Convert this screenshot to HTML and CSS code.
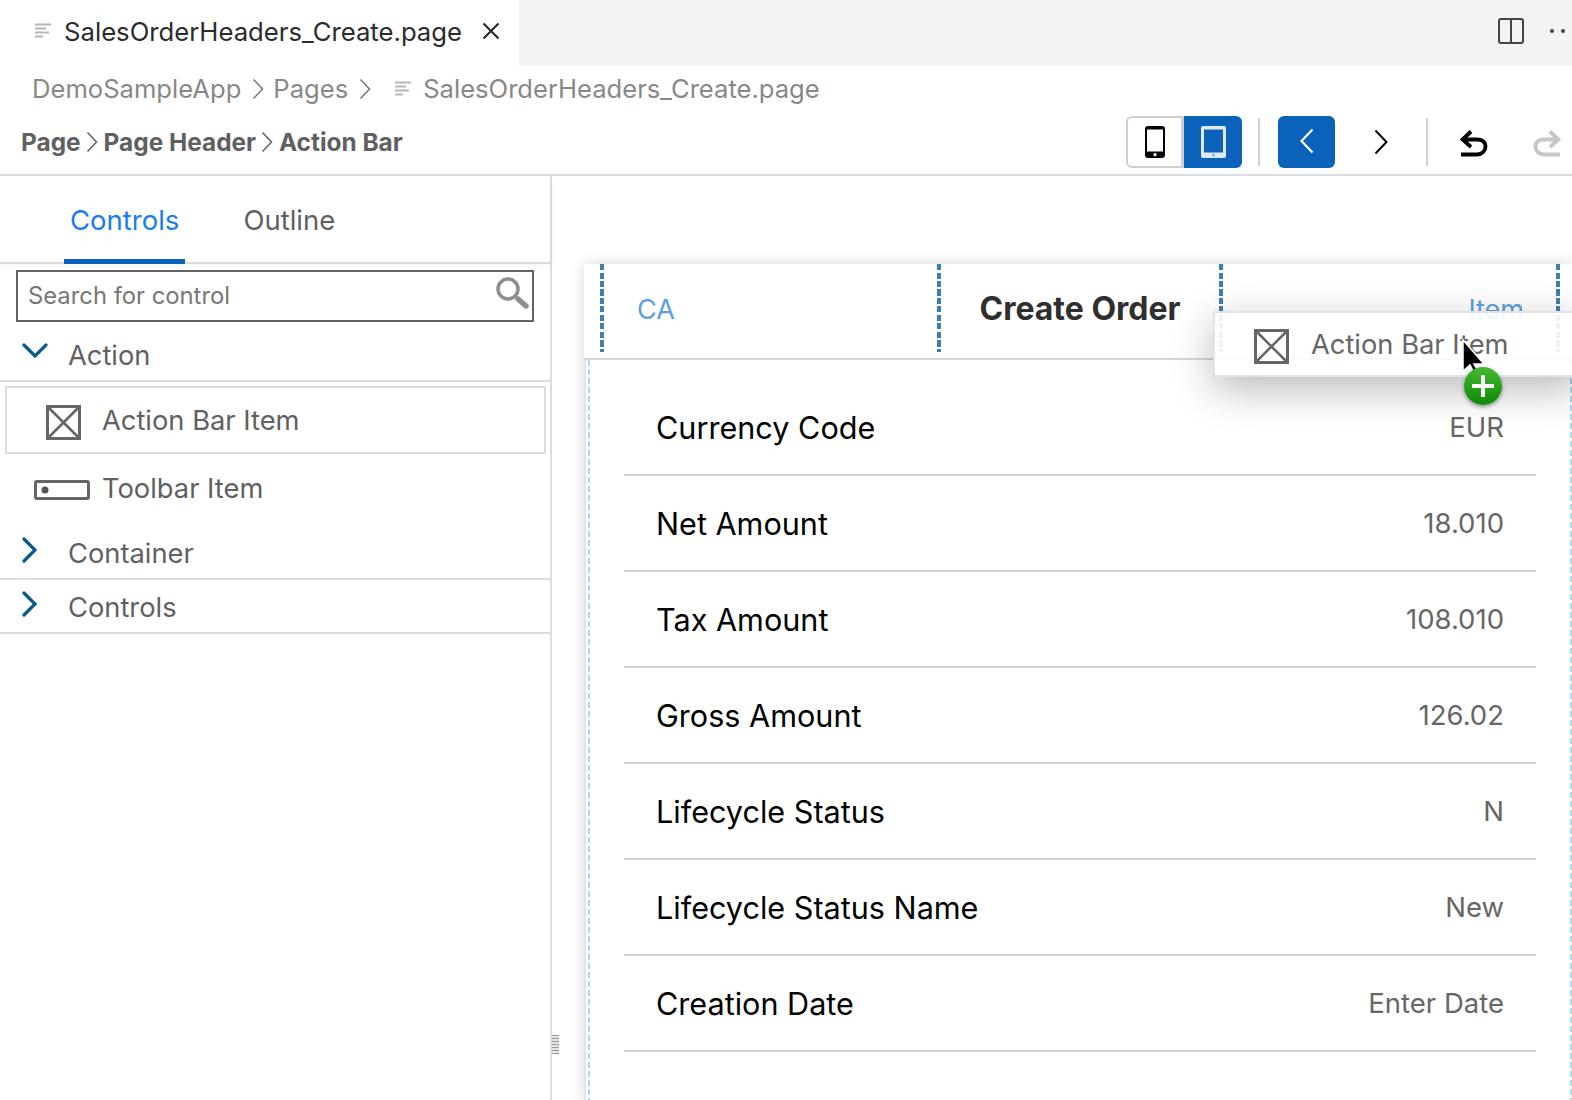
FILE: index.html
```html
<!DOCTYPE html>
<html lang="en">
<head>
  <meta charset="UTF-8" />
  <title>SalesOrderHeaders_Create.page</title>
  <link rel="stylesheet" href="styles.css">
</head>
<body>
  <div class="tabbar">
    <div class="tab">
      <svg class="file-icon" viewBox="0 0 16 16"><path d="M0 1.500h16M0 5.500h11M0 9.500h14M0 13.500h8"/></svg>
      <span>SalesOrderHeaders_Create.page</span>
      <svg class="tab-close" viewBox="0 0 18 18"><path d="M1.500 1.500l15 15M16.500 1.500l-15 15"/></svg>
    </div>
    <div class="tab-actions">
      <svg class="split-icon" viewBox="0 0 26 26"><rect x="1" y="1" width="24" height="24" rx="2"/><path d="M13 1v24"/></svg>
      <div class="dots"><i></i><i></i><i></i></div>
    </div>
  </div>

  <div class="crumbs">
    <span>DemoSampleApp</span>
    <svg class="chev" viewBox="0 0 12 22"><path d="M1.500 1.500l9 9.500-9 9.500"/></svg>
    <span>Pages</span>
    <svg class="chev" viewBox="0 0 12 22"><path d="M1.500 1.500l9 9.500-9 9.500"/></svg>
    <svg class="file-icon crumb-file" viewBox="0 0 16 16"><path d="M0 1.500h16M0 5.500h11M0 9.500h14M0 13.500h8"/></svg>
    <span>SalesOrderHeaders_Create.page</span>
  </div>

  <div class="toolbar">
    <div class="path">
      <b>Page</b>
      <svg class="chev" viewBox="0 0 12 22"><path d="M1.500 1.500l9 9.500-9 9.500"/></svg>
      <b>Page Header</b>
      <svg class="chev" viewBox="0 0 12 22"><path d="M1.500 1.500l9 9.500-9 9.500"/></svg>
      <b>Action Bar</b>
    </div>
    <div class="tools">
      <div class="segment">
        <div class="seg seg-phone">
          <svg width="20" height="32" viewBox="0 0 20 32"><rect width="20" height="32" rx="3" fill="#000"/><rect x="2" y="3.500" width="16" height="22" fill="#fff"/><circle cx="10" cy="28.700" r="1.600" fill="#fff"/></svg>
        </div>
        <div class="seg seg-tablet">
          <svg width="25" height="32" viewBox="0 0 25 32"><rect width="25" height="32" rx="2" fill="#dfeafa"/><rect x="3" y="3.500" width="19" height="23" fill="#0a62bb"/><circle cx="12.500" cy="29" r="1.500" fill="#8ab4e8"/></svg>
        </div>
      </div>
      <div class="tool-sep first-sep"></div>
      <div class="nav-back">
        <svg width="14" height="26" viewBox="0 0 14 26"><path d="M12.500 1.500L1.500 13l11 11.500" fill="none" stroke="#fff" stroke-width="2.200"/></svg>
      </div>
      <svg class="nav-next" width="14" height="26" viewBox="0 0 14 26"><path d="M1.500 1.500L12.500 13l-11 11.500" fill="none" stroke="#000" stroke-width="2"/></svg>
      <div class="tool-sep second-sep"></div>
      <svg class="undo" width="28" height="28" viewBox="0 0 28 28"><path d="M11 1.500L2.500 9.500 11 17M3 9.500h14c5 0 8.500 2.500 8.500 7s-3.500 8-8.500 8H1" fill="none" stroke="#000" stroke-width="3.800"/></svg>
      <svg class="redo" width="28" height="28" viewBox="0 0 28 28"><path d="M17 1.500l8.500 8L17 17M25 9.500H11c-5 0-8.500 2.500-8.500 7s3.500 8 8.500 8h16" fill="none" stroke="#c6c6c6" stroke-width="3.800"/></svg>
    </div>
  </div>

  <div class="workspace">
    <aside class="sidebar">
      <div class="side-tabs">
        <div class="side-tab active">Controls</div>
        <div class="side-tab">Outline</div>
      </div>
      <div class="search">
        <span>Search for control</span>
        <svg width="34" height="34" viewBox="0 0 34 34"><circle cx="13" cy="13" r="10" fill="#fff" stroke="#8f8f8f" stroke-width="3.600"/><path d="M23 23l8 7" stroke="#8f8f8f" stroke-width="5.500" stroke-linecap="round"/></svg>
      </div>
      <div class="group group-open">
        <svg class="caret-down" width="26" height="16" viewBox="0 0 26 16"><path d="M2 2l11 11L24 2" fill="none" stroke="#0b5a8c" stroke-width="3.200" stroke-linecap="round"/></svg>
        <span>Action</span>
      </div>
      <div class="item item-selected">
        <svg class="x-icon" viewBox="0 0 35 35"><rect x="1.500" y="1.500" width="32" height="32" fill="none" stroke="#666" stroke-width="3"/><path d="M2 2l31 31M33 2L2 33" stroke="#666" stroke-width="2.600"/></svg>
        <span>Action Bar Item</span>
      </div>
      <div class="item item-toolbar">
        <svg class="bar-icon" width="56" height="20" viewBox="0 0 56 20"><rect x="1.500" y="1.500" width="53" height="17" rx="1.500" fill="none" stroke="#666" stroke-width="3"/><circle cx="11" cy="10" r="3.500" fill="#555"/></svg>
        <span>Toolbar Item</span>
      </div>
      <div class="group group-container">
        <svg class="caret-right" width="16" height="26" viewBox="0 0 16 26"><path d="M2 2l11 11L2 24" fill="none" stroke="#0b5a8c" stroke-width="3.200" stroke-linecap="round"/></svg>
        <span>Container</span>
      </div>
      <div class="group group-controls">
        <svg class="caret-right" width="16" height="26" viewBox="0 0 16 26"><path d="M2 2l11 11L2 24" fill="none" stroke="#0b5a8c" stroke-width="3.200" stroke-linecap="round"/></svg>
        <span>Controls</span>
      </div>
    </aside>

    <main class="stage">
      <div class="grip"></div>
      <section class="card">
        <header class="card-head">
          <div class="head-cell head-left">CA</div>
          <div class="head-cell head-title">Create Order</div>
          <div class="head-cell head-right">Item</div>
          <div class="head-end"></div>
        </header>
        <div class="card-body">
          <div class="rows">
            <div class="row"><span>Currency Code</span><em>EUR</em></div>
            <div class="row"><span>Net Amount</span><em>18.010</em></div>
            <div class="row"><span>Tax Amount</span><em>108.010</em></div>
            <div class="row"><span>Gross Amount</span><em>126.02</em></div>
            <div class="row"><span>Lifecycle Status</span><em>N</em></div>
            <div class="row"><span>Lifecycle Status Name</span><em>New</em></div>
            <div class="row"><span>Creation Date</span><em>Enter Date</em></div>
          </div>
        </div>
      </section>
    </main>
  </div>

  <div class="ghost">
    <svg class="x-icon" viewBox="0 0 35 35"><rect x="1.500" y="1.500" width="32" height="32" fill="none" stroke="#666" stroke-width="3"/><path d="M2 2l31 31M33 2L2 33" stroke="#666" stroke-width="2.600"/></svg>
    <span>Action Bar Item</span>
  </div>
  <svg class="cursor" width="26" height="38" viewBox="0 0 26 38"><path d="M2 1v31l7-6 5 10 4-2-5-9h10z" fill="#000" stroke="#fff" stroke-width="1.500"/></svg>
  <div class="plus-badge"></div>
</body>
</html>
```

FILE: styles.css
```css
* { box-sizing: border-box; }
html, body { margin: 0; height: 1100px; overflow: hidden; }
body { font-family: Inter, "Noto Sans", sans-serif; background: #fff; color: #5f6062; width: 1572px; position: relative; }
svg { display: block; flex: none; }

/* editor tabs */
.tabbar { display: flex; height: 66px; background: #f3f3f3; }
.tab { width: 519px; background: #fff; display: flex; align-items: center; padding: 0 0 4px 35px; font-size: 25.700px; color: #2b2b2b; }
.tab span { margin-left: 13px; }
.file-icon { width: 16px; height: 16px; }
.file-icon path { stroke: #b5b5b5; stroke-width: 2; fill: none; }
.tab-close { width: 18px; height: 18px; margin-left: 20px; }
.tab-close path { stroke: #222; stroke-width: 2; fill: none; }
.tab-actions { flex: 1; display: flex; justify-content: flex-end; align-items: center; padding-bottom: 5px; }
.split-icon { width: 26px; height: 26px; margin-right: 26px; }
.split-icon rect, .split-icon path { fill: none; stroke: #444; stroke-width: 2; }
.dots { display: flex; gap: 7px; width: 22px; overflow: hidden; flex: none; }
.dots i { width: 4px; height: 4px; background: #444; border-radius: 50%; flex: none; }

/* breadcrumbs */
.crumbs { height: 50px; display: flex; align-items: center; padding: 0 0 5px 32px; font-size: 25.600px; color: #888; }
.crumbs .chev { margin: 0 9px 0 11px; }
.chev { width: 12px; height: 22px; }
.chev path { fill: none; stroke: #777; stroke-width: 1.500; }
.crumb-file { margin: 0 12px 0 15px; }
.crumb-file path { stroke: #b8b8b8; }

/* toolbar */
.toolbar { height: 60px; border-bottom: 2px solid #dcdce3; display: flex; justify-content: space-between; padding-left: 21px; }
.path { display: flex; align-items: center; gap: 5.500px; font-size: 24.400px; padding-bottom: 6px; }
.path b { font-weight: 700; }
.path .chev path { stroke: #5f6062; }
.tools { display: flex; align-items: flex-start; padding-right: 25px; }
.segment { display: flex; height: 52px; width: 116px; }
.seg { display: flex; align-items: center; justify-content: center; }
.seg-phone { flex: 0 0 58px; border: 2px solid #cfcfcf; border-right-width: 3px; border-radius: 6px 0 0 6px; }
.seg-tablet { flex: 0 0 58px; background: #0a62bb; border-radius: 0 6px 6px 0; }
.tool-sep { width: 2px; height: 48px; background: #d2d2d2; margin-top: 2px; }
.first-sep { margin-left: 16px; }
.nav-back { width: 57px; height: 52px; margin-left: 18px; background: #0a62bb; border-radius: 6px; display: flex; align-items: center; justify-content: center; padding-bottom: 3px; }
.nav-next { margin: 13px 0 0 39px; }
.second-sep { margin-left: 38px; }
.undo { margin: 14px 0 0 32px; }
.redo { margin: 14px -14px 0 45px; }

/* sidebar */
.workspace { display: flex; height: 924px; }
.sidebar { width: 552px; flex: none; border-right: 2px solid #dcdce3; }
.side-tabs { height: 88px; border-bottom: 2px solid #dcdce3; display: flex; padding-left: 64px; gap: 52px; box-shadow: 0 3px 8px rgba(0,0,0,.04); }
.side-tab { height: 88px; padding: 0 6px; display: flex; align-items: center; font-size: 27.500px; color: #5f6062; }
.side-tab.active { color: #1a7cf0; border-bottom: 5px solid #0a62bb; padding-top: 4px; }
.search { height: 52px; margin: 6px 16px 0; width: 518px; border: 2px solid #636363; display: flex; align-items: center; justify-content: space-between; padding: 0 3px 2px 10px; font-size: 23.800px; color: #777; }
.search svg { margin-top: -4px; }
.group { display: flex; align-items: center; font-size: 27.300px; border-bottom: 2px solid #dcdce3; color: #5f6062; padding-left: 22px; }
.group-open { height: 60px; padding-top: 8px; }
.caret-down { margin: -8px 20px 0 0; }
.group-container { height: 58px; padding-top: 6px; }
.group-controls { height: 54px; padding-top: 2px; }
.caret-right { margin: -6px 30px 0 0; }
.item { display: flex; align-items: center; font-size: 27.300px; color: #5f6062; }
.x-icon { width: 35px; height: 35px; filter: blur(.4px); }
.bar-icon { filter: blur(.4px); margin: 4px 12px 0 0; }
.item-selected { height: 68px; margin: 4px 5px 0; width: 541px; border: 2px solid #dcdce3; padding-left: 39px; }
.item-selected .x-icon { margin: 4px 21px 0 0; }
.item-toolbar { height: 68px; padding-left: 34px; }

/* preview */
.stage { flex: 1; padding: 88px 0 0 32px; position: relative; min-width: 0; }
.grip { position: absolute; left: 0; top: 859px; width: 7px; height: 19px; background: repeating-linear-gradient(#999 0 1px, #e4e4e4 1px 3px); }
.card { height: 836px; background: #fff; box-shadow: 0 0 14px rgba(0,0,0,.16); }
.card-head { height: 96px; border-bottom: 2px solid #d6d6d6; display: flex; padding-left: 16px; align-items: flex-start; }
.head-cell, .head-end { height: 88px; background: repeating-linear-gradient(#3f7fb2 0 6px, transparent 6px 8.500px) no-repeat left top / 4px 100%; display: flex; align-items: center; font-size: 27px; color: #5a9fe4; padding-top: 3px; }
.head-left { width: 337px; padding-left: 37px; }
.head-title { width: 282px; justify-content: center; font-size: 32px; font-weight: 700; color: #2f2f2f; padding: 1px 0 0 4px; }
.head-right { width: 337px; justify-content: flex-end; padding-right: 32px; }
.head-end { width: 4px; }
.card-body { height: 740px; border-left: 2px solid #d6e9f0; padding-left: 2px; }
.rows { height: 100%; padding: 20px 36px 0 36px; background: repeating-linear-gradient(#add8e6 0 6px, transparent 6px 9px) no-repeat left top / 2px 100%, repeating-linear-gradient(#add8e6 0 6px, transparent 6px 9px) no-repeat right 0 top / 2px 100%; }
.row { height: 96px; border-bottom: 2px solid #d2d2d2; display: flex; justify-content: space-between; align-items: center; padding: 0 32px; font-size: 30.600px; color: #000; }
.row em { font-style: normal; font-size: 27.500px; color: #666; }

/* drag preview */
.ghost { position: absolute; left: 1213px; top: 311px; width: 370px; height: 66px; background: rgba(255,255,255,.9); border: 2px solid #e2e2ea; box-shadow: 0 12px 40px rgba(0,0,0,.28); display: flex; align-items: center; padding-left: 39px; font-size: 27.300px; color: #666; }
.ghost .x-icon { margin: 4px 22px 0 0; }
.cursor { position: absolute; left: 1461px; top: 339px; }
.plus-badge { position: absolute; left: 1464px; top: 367px; width: 38px; height: 38px; border-radius: 50%; background: linear-gradient(#46b82e, #0d8a08); box-shadow: 0 2px 4px rgba(0,0,0,.4); }
.plus-badge::before { content: ""; position: absolute; left: 8px; right: 8px; top: 17px; height: 4px; background: #fff; }
.plus-badge::after { content: ""; position: absolute; top: 8px; bottom: 8px; left: 17px; width: 4px; background: #fff; }
```
